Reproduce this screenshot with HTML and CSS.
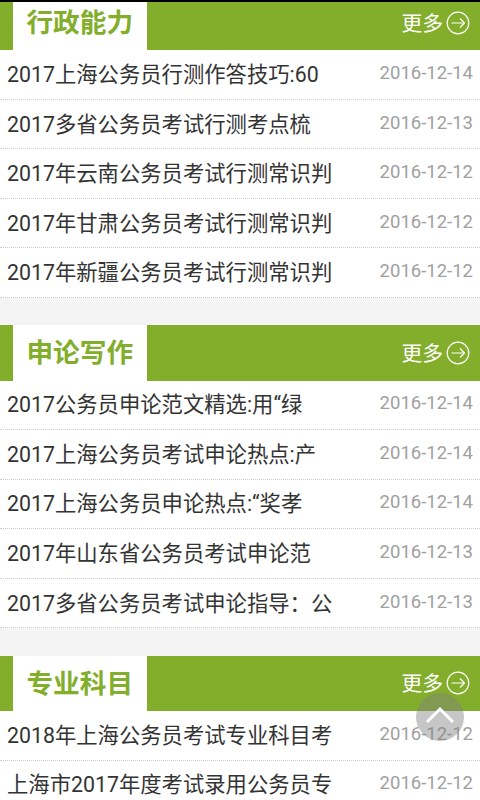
FILE: index.html
```html
<!DOCTYPE html>
<html lang="zh-CN">
<head>
<meta charset="utf-8">
<title>公务员考试</title>
<link rel="stylesheet" href="styles.css">
</head>
<body>
<div class="statusbar"></div>
<main class="page">
  <section class="section">
    <header class="head"><h2 class="tab">行政能力</h2><a class="more">更多<svg class="arrow" viewBox="0 0 24 24"><circle cx="12" cy="12" r="10.800"/><path d="M5.500 12H18.500M14 7.500 18.500 12 14 16.500"/></svg></a></header>
    <ul class="list">
      <li class="row"><span class="name">2017上海公务员行测作答技巧:60</span><span class="date">2016-12-14</span></li>
      <li class="row"><span class="name">2017多省公务员考试行测考点梳</span><span class="date">2016-12-13</span></li>
      <li class="row"><span class="name">2017年云南公务员考试行测常识判</span><span class="date">2016-12-12</span></li>
      <li class="row"><span class="name">2017年甘肃公务员考试行测常识判</span><span class="date">2016-12-12</span></li>
      <li class="row"><span class="name">2017年新疆公务员考试行测常识判</span><span class="date">2016-12-12</span></li>
    </ul>
  </section>
  <section class="section">
    <header class="head"><h2 class="tab">申论写作</h2><a class="more">更多<svg class="arrow" viewBox="0 0 24 24"><circle cx="12" cy="12" r="10.800"/><path d="M5.500 12H18.500M14 7.500 18.500 12 14 16.500"/></svg></a></header>
    <ul class="list">
      <li class="row"><span class="name">2017公务员申论范文精选:用“绿</span><span class="date">2016-12-14</span></li>
      <li class="row"><span class="name">2017上海公务员考试申论热点:产</span><span class="date">2016-12-14</span></li>
      <li class="row"><span class="name">2017上海公务员申论热点:“奖孝</span><span class="date">2016-12-14</span></li>
      <li class="row"><span class="name">2017年山东省公务员考试申论范</span><span class="date">2016-12-13</span></li>
      <li class="row"><span class="name">2017多省公务员考试申论指导：公</span><span class="date">2016-12-13</span></li>
    </ul>
  </section>
  <section class="section">
    <header class="head"><h2 class="tab">专业科目</h2><a class="more">更多<svg class="arrow" viewBox="0 0 24 24"><circle cx="12" cy="12" r="10.800"/><path d="M5.500 12H18.500M14 7.500 18.500 12 14 16.500"/></svg></a></header>
    <ul class="list">
      <li class="row"><span class="name">2018年上海公务员考试专业科目考</span><span class="date">2016-12-12</span></li>
      <li class="row"><span class="name">上海市2017年度考试录用公务员专</span><span class="date">2016-12-12</span></li>
    </ul>
  </section>
</main>
<button class="totop" aria-label="返回顶部"><svg viewBox="0 0 48 48"><path d="M11 29 24 16l13 13"/></svg></button>
</body>
</html>
```
FILE: styles.css
```css
* { box-sizing: border-box; }
html, body { margin: 0; padding: 0; }
body {
  width: 480px;
  height: 800px;
  overflow: hidden;
  position: relative;
  background: #f4f4f4;
  font-family: Roboto, "Noto Sans CJK SC", sans-serif;
}
.statusbar { position: relative; z-index: 2; height: 2px; background: #000; }
.page { margin-top: -7px; }
.section { margin-bottom: 27.5px; background: #fff; }
.head {
  display: flex;
  align-items: center;
  justify-content: space-between;
  height: 55.200px;
  padding-left: 13px;
  padding-right: 10px;
  background: #82ae2b;
}
.tab {
  width: 133.500px;
  height: 100%;
  margin: 0;
  padding-top: 3px;
  background: #fff;
  color: #82ae2b;
  font-size: 26.670px;
  font-weight: 700;
  line-height: 51px;
  text-align: center;
}
.more {
  display: flex;
  align-items: center;
  gap: 3px;
  margin-top: -2px;
  color: #fff;
  font-size: 20.800px;
}
.arrow { width: 24px; height: 24px; margin-top: 2px; fill: none; stroke: #fff; stroke-width: 1.200; }
.list { margin: 0; padding: 0; list-style: none; }
.row {
  display: flex;
  align-items: center;
  justify-content: space-between;
  height: 49.560px;
  padding: 0 7px 3px;
  border-bottom: 1px dotted #ccc;
}
.name { color: #333; font-size: 21.330px; white-space: nowrap; margin-bottom: 1px; }
.date { color: #a0a0a0; font-size: 18.500px; }
.totop {
  position: absolute;
  left: 416px;
  top: 693px;
  width: 48px;
  height: 48px;
  padding: 0;
  border: 0;
  border-radius: 50%;
  background: rgba(128, 128, 128, .45);
}
.totop svg { display: block; width: 48px; height: 48px; fill: none; stroke: #fff; stroke-width: 3; }
```
